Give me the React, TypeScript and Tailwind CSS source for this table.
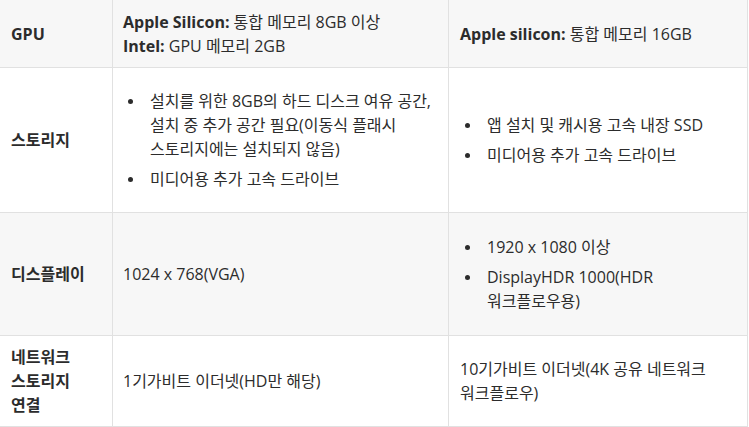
import React from 'react';

const font = { fontFamily: '"Open Sans", "Noto Sans CJK KR", sans-serif' };

function Bullets({ items }: { items: React.ReactNode[] }) {
  return (
    <ul className="flex flex-col gap-[6px]">
      {items.map((it, i) => (
        <li key={i} className="flex items-start">
          <span className="w-[27px] h-[24px] shrink-0 flex items-center">
            <span className="ml-[5px] w-[5px] h-[5px] rounded-full bg-[#2c2c2c]" />
          </span>
          <span>{it}</span>
        </li>
      ))}
    </ul>
  );
}

type Row = {
  label: React.ReactNode;
  mid: React.ReactNode;
  right: React.ReactNode;
  h: string;
  gray: boolean;
};

const rows: Row[] = [
  {
    label: 'GPU',
    mid: (
      <div>
        <div>
          <b className="font-bold">Apple Silicon:</b> 통합 메모리 8GB 이상
        </div>
        <div>
          <b className="font-bold">Intel:</b> GPU 메모리 2GB
        </div>
      </div>
    ),
    right: (
      <div>
        <b className="font-bold">Apple silicon:</b> 통합 메모리 16GB
      </div>
    ),
    h: 'h-[68px]',
    gray: true,
  },
  {
    label: '스토리지',
    mid: (
      <Bullets
        items={[
          <>
            설치를 위한 8GB의 하드 디스크 여유 공간,
            <br />
            설치 중 추가 공간 필요(이동식 플래시
            <br />
            스토리지에는 설치되지 않음)
          </>,
          '미디어용 추가 고속 드라이브',
        ]}
      />
    ),
    right: <Bullets items={['앱 설치 및 캐시용 고속 내장 SSD', '미디어용 추가 고속 드라이브']} />,
    h: 'h-[145px]',
    gray: false,
  },
  {
    label: '디스플레이',
    mid: <div>1024 x 768(VGA)</div>,
    right: (
      <Bullets
        items={[
          '1920 x 1080 이상',
          <>
            DisplayHDR 1000(HDR
            <br />
            워크플로우용)
          </>,
        ]}
      />
    ),
    h: 'h-[123px]',
    gray: true,
  },
  {
    label: (
      <>
        네트워크
        <br />
        스토리지
        <br />
        연결
      </>
    ),
    mid: <div>1기가비트 이더넷(HD만 해당)</div>,
    right: (
      <div>
        10기가비트 이더넷(4K 공유 네트워크
        <br />
        워크플로우)
      </div>
    ),
    h: 'h-[91px]',
    gray: false,
  },
];

export default function App() {
  return (
    <div className="w-[749px] h-[427px] bg-white overflow-hidden text-[16px] leading-[24px] text-[#2c2c2c]" style={font}>
      <div className="grid grid-cols-[113px_336px_299px]">
        {rows.map((r, i) => {
          const bg = r.gray ? 'bg-[#f7f7f7]' : 'bg-white';
          return (
            <React.Fragment key={i}>
              <div className={`${r.h} ${bg} flex items-center pl-[11px] pr-2 font-bold border-r border-b border-[#e1e1e1]`}>
                <div>{r.label}</div>
              </div>
              <div className={`${r.h} ${bg} flex items-center pl-[10px] pr-2 border-r border-b border-[#e1e1e1]`}>
                {r.mid}
              </div>
              <div className={`${r.h} ${bg} flex items-center pl-[11px] pr-2 border-r border-b border-[#e1e1e1]`}>
                {r.right}
              </div>
            </React.Fragment>
          );
        })}
      </div>
    </div>
  );
}
